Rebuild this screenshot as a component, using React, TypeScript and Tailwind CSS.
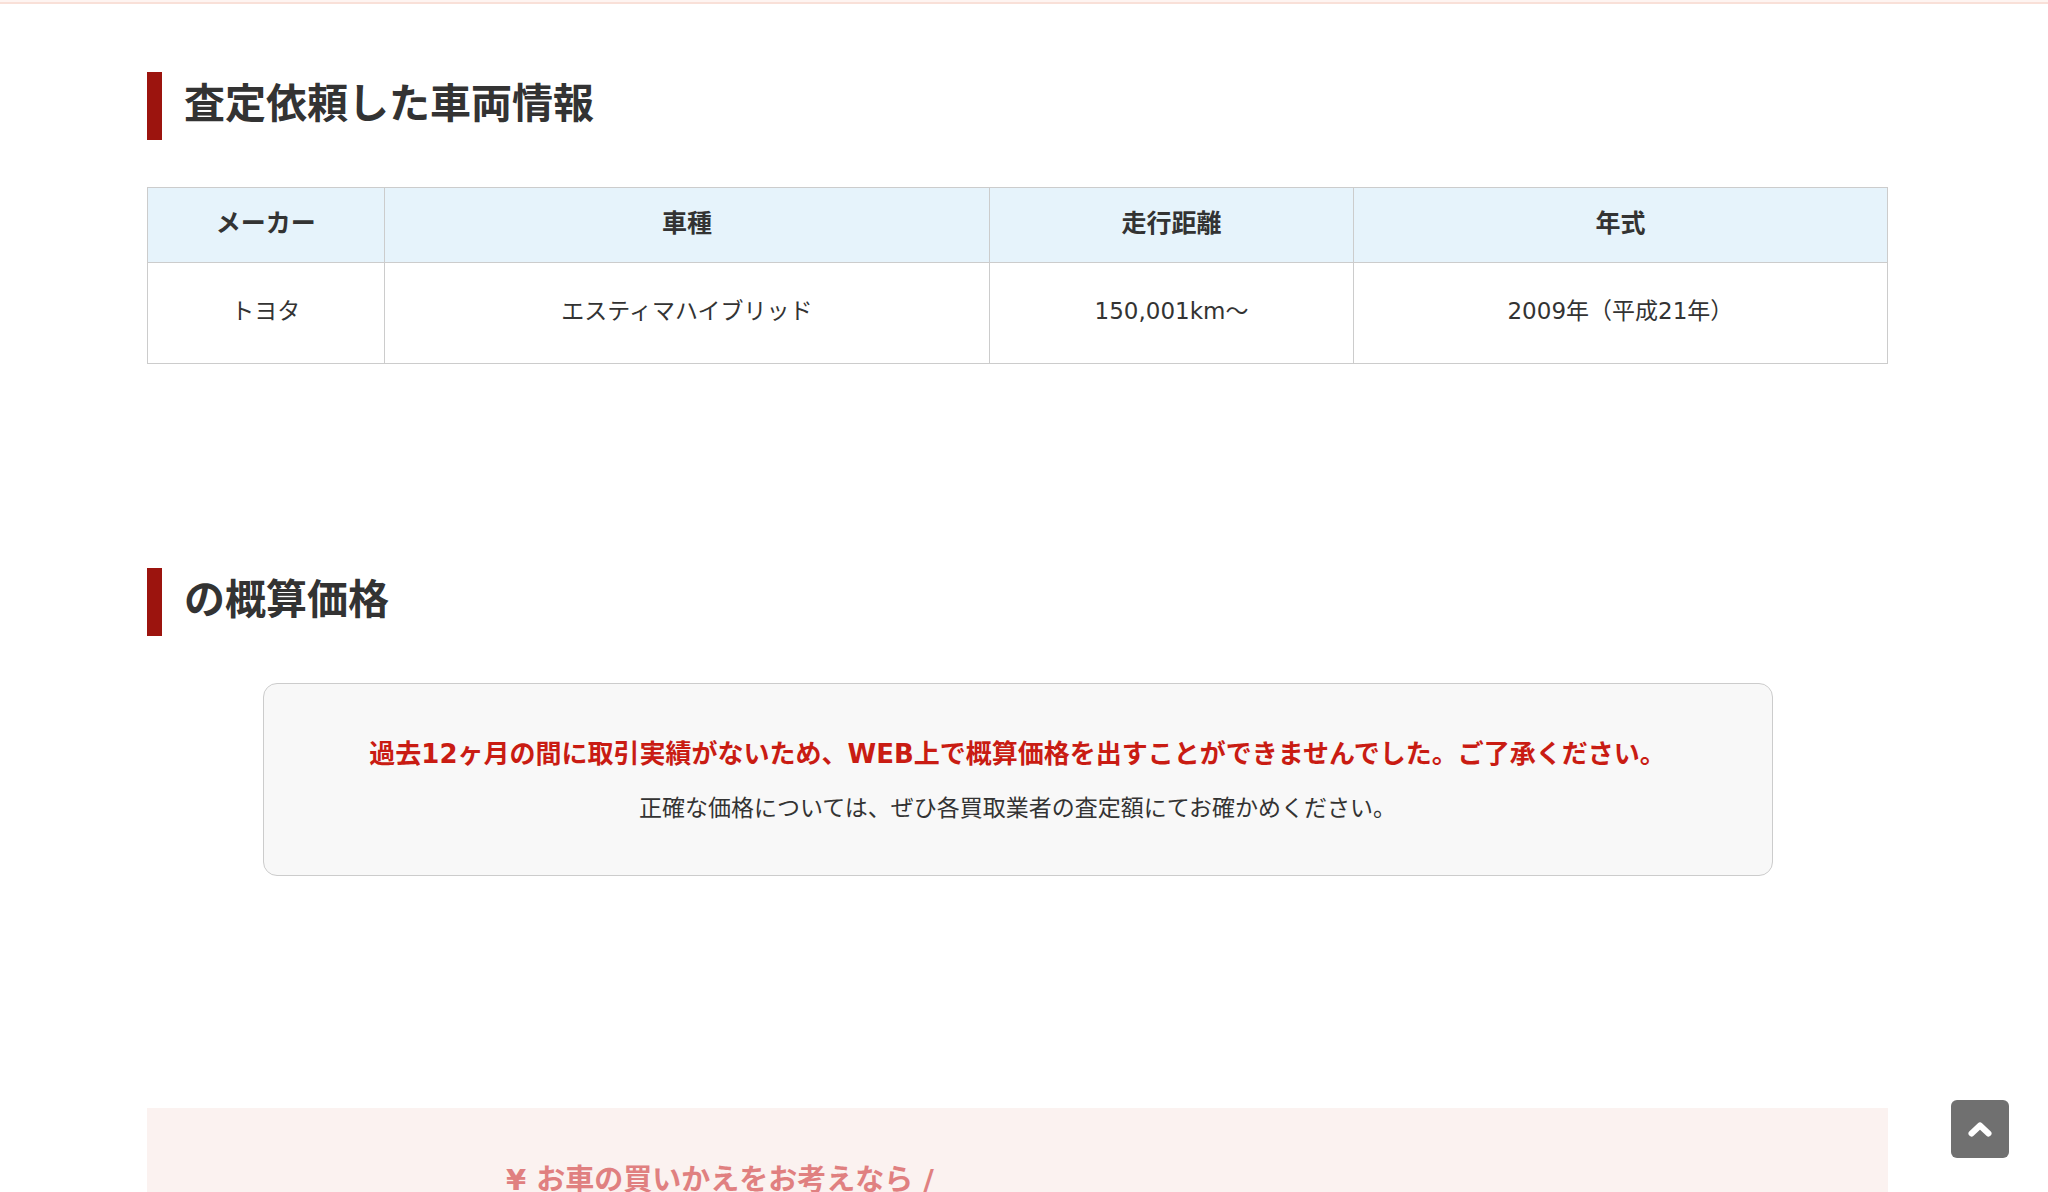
import type { ReactNode } from "react";

const vehicle = [
  { label: "メーカー", value: "トヨタ", width: "w-[13.6%]" },
  { label: "車種", value: "エスティマハイブリッド", width: "w-[34.8%]" },
  { label: "走行距離", value: "150,001km～", width: "w-[20.9%]" },
  { label: "年式", value: "2009年（平成21年）", width: "w-[30.7%]" },
];

function SectionTitle({ children }: { children: ReactNode }) {
  return (
    <h2 className="border-l-[15px] border-[#9c140e] pb-1 pl-[22px] text-[41px] leading-[64px] font-bold">
      {children}
    </h2>
  );
}

function VehicleTable() {
  return (
    <table className="mt-[47px] w-full table-fixed border-collapse text-center">
      <thead>
        <tr>
          {vehicle.map((item) => (
            <th
              key={item.label}
              scope="col"
              className={`${item.width} border border-[#ccc] bg-[#e6f3fb] pt-4 pb-[18px] text-[25px] leading-10 font-bold`}
            >
              {item.label}
            </th>
          ))}
        </tr>
      </thead>
      <tbody>
        <tr>
          {vehicle.map((item) => (
            <td
              key={item.label}
              className="border border-[#ccc] pt-7 pb-8 text-[23px] leading-10"
            >
              {item.value}
            </td>
          ))}
        </tr>
      </tbody>
    </table>
  );
}

export default function App() {
  return (
    <div className="min-h-screen bg-white font-['DejaVu_Sans','Noto_Sans_CJK_JP',sans-serif] text-[#333]">
      <div className="h-1 border-b-2 border-[#f9e0d8] bg-[#fef4f1]" />
      <main className="pt-[68px] pr-40 pl-[147px]">
        <section>
          <SectionTitle>査定依頼した車両情報</SectionTitle>
          <VehicleTable />
        </section>

        <section className="mt-[204px]">
          <SectionTitle>の概算価格</SectionTitle>
          <div className="mx-auto mt-[47px] w-[1510px] max-w-full rounded-[14px] border border-[#ccc] bg-[#f8f8f8] pt-12 pb-[47px] text-center">
            <p className="text-[26px] leading-[44px] font-bold text-[#c91c13]">
              過去12ヶ月の間に取引実績がないため、WEB上で概算価格を出すことができませんでした。ご了承ください。
            </p>
            <p className="mt-3 text-[23px] leading-10">
              正確な価格については、ぜひ各買取業者の査定額にてお確かめください。
            </p>
          </div>
        </section>

        <section className="mt-[232px] bg-[#fbf2f0] pt-[52px] pl-[359px]">
          <p className="text-[29px] leading-10 font-bold text-[#e08080]">
            ¥ お車の買いかえをお考えなら /
          </p>
        </section>
      </main>

      <button
        type="button"
        aria-label="ページの先頭へ戻る"
        onClick={() => window.scrollTo({ top: 0, behavior: "smooth" })}
        className="fixed right-[39px] bottom-[34px] flex size-[58px] items-center justify-center rounded-md bg-[#707070] text-white"
      >
        <svg viewBox="0 0 24 16" fill="none" className="h-4 w-6">
          <path
            d="M3.5 12.5 12 4.5l8.5 8"
            stroke="currentColor"
            strokeWidth="6"
            strokeLinecap="round"
            strokeLinejoin="round"
          />
        </svg>
      </button>
    </div>
  );
}
